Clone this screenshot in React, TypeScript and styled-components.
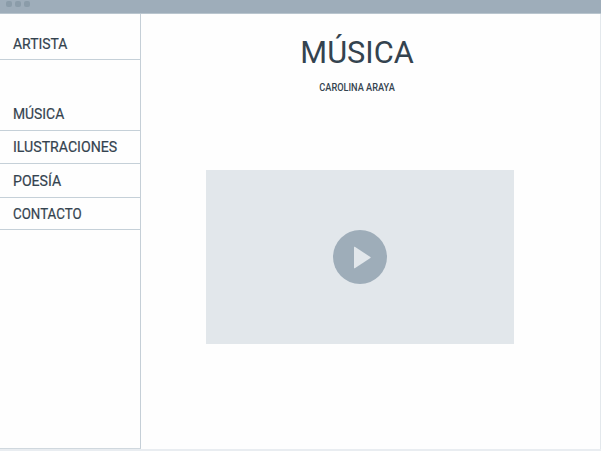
import React from "react";
import styled, { createGlobalStyle } from "styled-components";

const GlobalStyle = createGlobalStyle`
  * { box-sizing: border-box; }
  body { margin: 0; background: #fff; overflow: hidden; }
`;

const Window = styled.div`
  width: 601px;
  height: 451px;
  display: flex;
  flex-direction: column;
  background: #fefefe;
  color: #34434f;
  font-family: Roboto, "Liberation Sans", sans-serif;
  border-bottom: 2px solid #e9edf1;
`;

const TitleBar = styled.header`
  flex: 0 0 14px;
  display: flex;
  gap: 3px;
  padding: 1px 0 0 6px;
  background: #9eadba;
  border-bottom: 1px solid #b9c5ce;
`;

const Dot = styled.span`
  width: 6px;
  height: 6px;
  border-radius: 2px;
  background: #8b9ca9;
`;

const Body = styled.div`
  flex: 1;
  display: flex;
  border-right: 1px solid #e3e8ec;
`;

const Sidebar = styled.nav`
  flex: 0 0 141px;
  border-right: 1px solid #c5cfd7;
  border-bottom: 1px solid #d0d8de;
`;

const NavItem = styled.a<{ $height: number; $drop: number }>`
  display: flex;
  align-items: flex-end;
  height: ${(p) => p.$height}px;
  padding: 0 0 ${(p) => p.$drop}px 12.5px;
  border-bottom: 1px solid #c5d0d8;
  font-size: 15px;
  line-height: 18px;
  -webkit-text-stroke: 0.2px currentColor;
`;

const Condensed = styled.span<{ $scale: number; $center?: boolean }>`
  display: inline-block;
  white-space: nowrap;
  transform: scaleX(${(p) => p.$scale});
  transform-origin: ${(p) => (p.$center ? "center" : "left")};
`;

const Main = styled.main`
  flex: 1;
  display: flex;
  flex-direction: column;
  align-items: center;
  padding: 19px 21px 0 0;
`;

const Title = styled.h1`
  margin: 0 5px 0 0;
  font-size: 32px;
  line-height: 38px;
  font-weight: 400;
`;

const Subtitle = styled.p`
  margin: 11px 5px 0 0;
  font-size: 10px;
  line-height: 12px;
  font-weight: 500;
`;

const Video = styled.section`
  display: flex;
  align-items: center;
  justify-content: center;
  width: 308px;
  height: 174px;
  margin-top: 76px;
  background: #e2e7eb;
`;

const PlayIcon = styled.svg`
  display: block;
  width: 54px;
  height: 54px;
`;

const items = [
  { label: "ARTISTA", height: 46, drop: 6, scale: 0.93 },
  { label: "MÚSICA", height: 71, drop: 7, scale: 0.925 },
  { label: "ILUSTRACIONES", height: 33, drop: 7, scale: 0.942 },
  { label: "POESÍA", height: 34, drop: 7, scale: 0.94 },
  { label: "CONTACTO", height: 32, drop: 6, scale: 0.888 },
];

export default function App() {
  return (
    <>
      <GlobalStyle />
      <Window>
        <TitleBar>
          <Dot />
          <Dot />
          <Dot />
        </TitleBar>
        <Body>
          <Sidebar>
            {items.map((item) => (
              <NavItem key={item.label} $height={item.height} $drop={item.drop}>
                <Condensed $scale={item.scale}>{item.label}</Condensed>
              </NavItem>
            ))}
          </Sidebar>
          <Main>
            <Title>
              <Condensed $scale={0.96} $center>MÚSICA</Condensed>
            </Title>
            <Subtitle>
              <Condensed $scale={0.92} $center>CAROLINA ARAYA</Condensed>
            </Subtitle>
            <Video>
              <PlayIcon viewBox="0 0 54 54">
                <circle cx="27" cy="27" r="27" fill="#9eadb9" />
                <path d="M21 17.2v20.6q0 .8.8.4l15.6-10.2q.6-.5 0-1L21.8 16.8q-.8-.4-.8.4z" fill="#e2e7eb" />
              </PlayIcon>
            </Video>
          </Main>
        </Body>
      </Window>
    </>
  );
}
